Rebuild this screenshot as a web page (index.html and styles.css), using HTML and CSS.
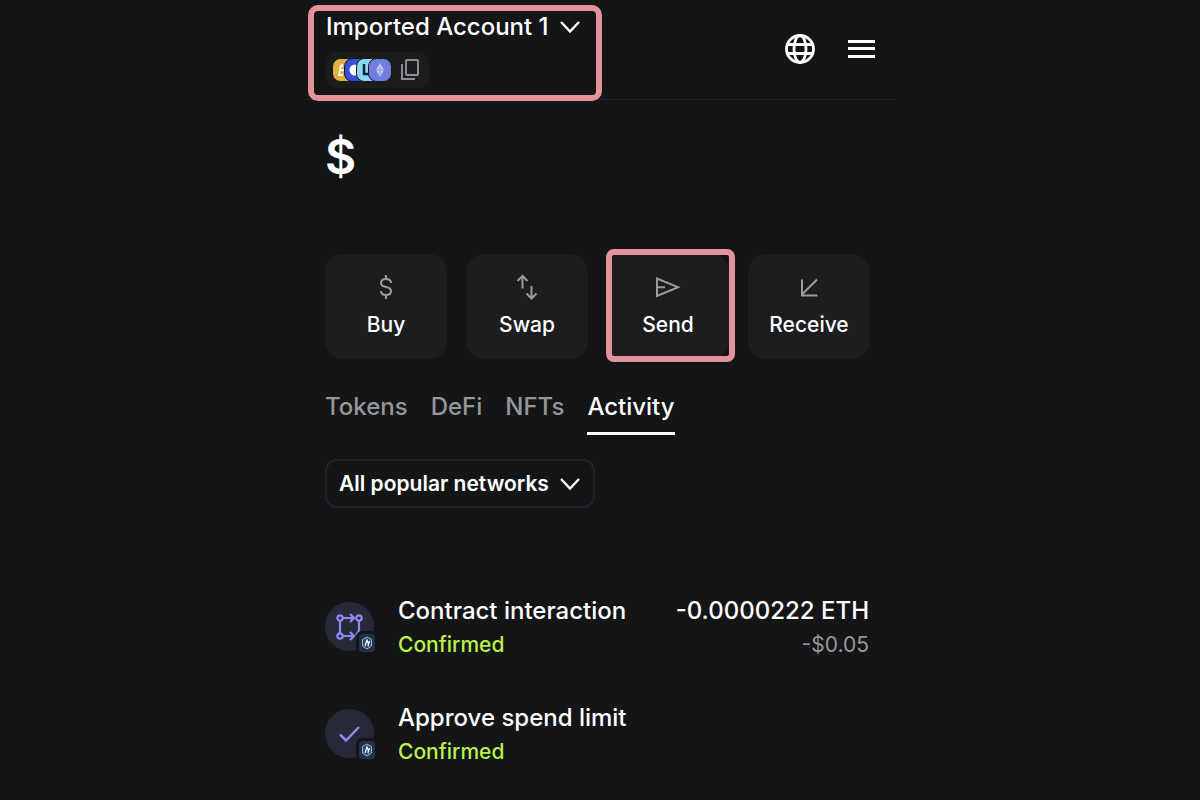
FILE: index.html
```html
<!DOCTYPE html>
<html lang="en">
<head>
<meta charset="utf-8">
<meta name="viewport" content="width=device-width, initial-scale=1">
<title>Wallet</title>
<link rel="stylesheet" href="styles.css">
</head>
<body>
<svg class="defs" aria-hidden="true">
  <symbol id="chevron" viewBox="0 0 20 12"><path d="M1 1l9 9.500L19 1" fill="none" stroke="currentColor" stroke-width="2.400"/></symbol>
  <symbol id="network" viewBox="0 0 16 18">
    <rect width="16" height="18" rx="3" fill="#213147"/>
    <path d="M8 3l4.500 2.500v6.500L8 15l-4.500-3V5.500z" fill="#2d4663" stroke="#9dbbd2"/>
    <path d="M6 12l2-6 1.500 4M9 12l1.500-5" fill="none" stroke="#fff" stroke-width="1.200"/>
    <path d="M8 10l1.500 3" stroke="#3da0e8"/>
  </symbol>
</svg>
<div class="wallet">
  <header class="header">
    <div class="account highlight">
      <button class="account-picker" type="button">Imported Account 1
        <svg class="chevron" aria-hidden="true"><use href="#chevron"/></svg>
      </button>
      <button class="addresses" type="button" aria-label="Copy network addresses">
        <svg width="60" height="24" viewBox="0 0 60 24" aria-hidden="true">
          <g stroke="#141517">
            <rect x=".5" y=".5" width="23" height="23" rx="8" fill="#e0b340"/>
            <path d="M9 7l-2 10h4M8 12h4M10 6v3" fill="none" stroke="#fff" stroke-width="1.800"/>
            <rect x="12.500" y=".5" width="23" height="23" rx="8" fill="#3650dc"/>
            <circle cx="23" cy="12" r="5.500" fill="#fff" stroke="none"/>
            <rect x="24.500" y=".5" width="23" height="23" rx="8" fill="#8ad8f4"/>
            <path d="M32 6v10h6" fill="none" stroke="#14202b" stroke-width="2.500"/>
            <rect x="36.500" y=".5" width="23" height="23" rx="8" fill="#6f7ce0"/>
          </g>
          <path d="M48 5l4 7-4 7-4-7z" fill="#c3caf8"/><path d="M48 9v8M44 12h8" stroke="#8b95ea"/>
        </svg>
        <svg width="20" height="24" viewBox="0 0 20 24" fill="none" stroke="#8d8e91" stroke-width="2" aria-hidden="true"><rect x="5" y="2" width="12" height="15" rx="1"/><path d="M1 6v15h13"/></svg>
      </button>
    </div>
    <div class="tools">
      <button type="button" aria-label="Connected sites">
        <svg width="32" height="32" viewBox="0 0 32 32" fill="none" stroke="#fff" stroke-width="2.800" aria-hidden="true"><circle cx="16" cy="16" r="13.500"/><ellipse cx="16" cy="16" rx="6" ry="13.500"/><path d="M4 11.500h24M4 20.500h24"/></svg>
      </button>
      <button type="button" aria-label="Menu">
        <svg width="28" height="32" viewBox="0 0 28 32" stroke="#fff" stroke-width="3" aria-hidden="true"><path d="M1 8.500h27M1 15.500h27M1 23.500h27"/></svg>
      </button>
    </div>
  </header>
  <main class="content">
    <p class="balance">$</p>
    <div class="actions">
      <button class="action" type="button">
        <svg viewBox="0 0 28 28" aria-hidden="true"><path d="M14 2v4M14 22v4M19 10c0-2.500-2-4-5-4s-5 1.500-5 4 2 3.500 5 4 5 1.500 5 4-2 4-5 4-5-1.500-5-4"/></svg>
        Buy
      </button>
      <button class="action" type="button">
        <svg viewBox="0 0 28 28" aria-hidden="true"><path d="M9.500 15.500V3M4.500 8l5-5 5 5M18.500 13v12.500M13.500 20.500l5 5 5-5"/></svg>
        Swap
      </button>
      <button class="action highlight" type="button">
        <svg viewBox="0 0 28 28" aria-hidden="true"><path d="M3 5.500v17.500L24 14.200zM3 14.200h8"/></svg>
        Send
      </button>
      <button class="action" type="button">
        <svg viewBox="0 0 28 28" aria-hidden="true"><path d="M22 6.500L7 21.500M7 6.500v16h15.500"/></svg>
        Receive
      </button>
    </div>
    <nav class="tabs">
      <a href="#tokens">Tokens</a>
      <a href="#defi">DeFi</a>
      <a href="#nfts">NFTs</a>
      <a class="current" href="#activity" aria-current="page">Activity</a>
    </nav>
    <div class="filter">
      <select aria-label="Networks"><option>All popular networks</option></select>
      <svg class="chevron" aria-hidden="true"><use href="#chevron"/></svg>
    </div>
    <ul class="activity">
      <li>
        <div class="avatar">
          <svg width="28" height="28" viewBox="0 0 28 28" fill="none" stroke="#8b8df0" stroke-width="2.200" aria-hidden="true"><circle cx="4" cy="5" r="2.700"/><circle cx="23" cy="5" r="2.700"/><circle cx="4" cy="23" r="2.700"/><path d="M4 8v12M7 5h11M14 1l4 4-4 4M7 23h11M14 19l4 4-4 4M23 8v10l-3 4"/></svg>
          <svg class="badge" aria-hidden="true"><use href="#network"/></svg>
        </div>
        <div class="what"><strong>Contract interaction</strong><span class="status">Confirmed</span></div>
        <div class="amount"><strong>-0.0000222 ETH</strong><span>-$0.05</span></div>
      </li>
      <li>
        <div class="avatar">
          <svg width="28" height="28" viewBox="0 0 28 28" fill="none" stroke="#8b8df0" stroke-width="2.500" aria-hidden="true"><path d="M4 14.500l6 6L23 7"/></svg>
          <svg class="badge" aria-hidden="true"><use href="#network"/></svg>
        </div>
        <div class="what"><strong>Approve spend limit</strong><span class="status">Confirmed</span></div>
      </li>
    </ul>
  </main>
</div>
</body>
</html>
```
FILE: styles.css
```css
* { box-sizing: border-box; }
body {
  margin: 0;
  background: #141517;
  color: #fff;
  font-family: Inter, "Liberation Sans", sans-serif;
  font-size: 24px;
  font-weight: 500;
  line-height: 32px;
}
button, select { font: inherit; color: inherit; border: 0; background: none; padding: 0; }
svg { display: block; flex: none; }
.defs { position: absolute; width: 0; height: 0; }
.wallet { max-width: 592px; margin: 0 auto; }
.highlight { position: relative; }
.highlight::after {
  content: "";
  position: absolute;
  inset: -5px -6px -3px -1px;
  border: 6px solid #e5939a;
  border-radius: 8px;
}
.header {
  display: flex;
  justify-content: space-between;
  align-items: flex-start;
  min-height: 100px;
  padding: 11px 21px 0 22px;
  border-bottom: 1px solid #222326;
}
.account { display: flex; flex-direction: column; align-items: flex-start; gap: 9px; }
.account.highlight::after { inset: -6px -22px -13px -18px; border-radius: 10px; }
.account-picker { display: flex; align-items: center; gap: 11px; }
.chevron { width: 20px; height: 12px; }
.addresses { display: flex; align-items: center; gap: 9px; padding: 6px 8px 6px 6px; border-radius: 10px; background: #1b1c1e; }
.tools { display: flex; gap: 31px; padding-top: 22px; }
.content { padding: 29px 26px 32px 21px; }
.balance { margin: 0; font-size: 48px; line-height: 56px; font-weight: 600; }
.actions { display: grid; grid-template-columns: repeat(4, 1fr); gap: 19px; margin-top: 69px; }
.action {
  display: flex;
  flex-direction: column;
  align-items: center;
  gap: 8px;
  padding: 19px 0 18px;
  border-radius: 18px;
  background: #1c1d1f;
  font-size: 21px;
}
.action svg { width: 28px; height: 28px; fill: none; stroke: #9b9c9e; stroke-width: 2; }
.tabs { display: flex; gap: 23px; margin-top: 32px; }
.tabs a { color: #96979a; text-decoration: none; padding-bottom: 9px; border-bottom: 3px solid transparent; }
.tabs .current { color: #fff; border-color: #fff; }
.filter { display: inline-grid; align-items: center; margin-top: 24px; }
.filter > * { grid-area: 1 / 1; }
.filter select {
  appearance: none;
  height: 49px;
  padding: 0 44px 0 12px;
  border: 2px solid #222326;
  border-radius: 12px;
  font-size: 21px;
  font-weight: 600;
}
.filter .chevron { justify-self: end; margin-right: 15px; pointer-events: none; }
.activity { list-style: none; margin: 87px 0 0; padding: 0; display: grid; gap: 40px; }
.activity li { display: flex; align-items: flex-start; }
.avatar {
  position: relative;
  display: grid;
  place-items: center;
  width: 49px;
  height: 49px;
  margin: 7px 24px 0 0;
  border-radius: 50%;
  background: #27283a;
}
.badge { position: absolute; right: -4px; bottom: -4px; width: 22px; height: 24px; border: 3px solid #141517; border-radius: 6px; background: #141517; }
.what, .amount { display: grid; gap: 1px; align-content: start; }
.what { flex: 1; }
.amount { justify-items: end; padding-right: 1px; }
strong { font-weight: 500; }
.what span, .amount span { font-size: 21px; line-height: 34px; }
.status { color: #baf24a; }
.amount span { color: #96979a; font-weight: 400; }
```
